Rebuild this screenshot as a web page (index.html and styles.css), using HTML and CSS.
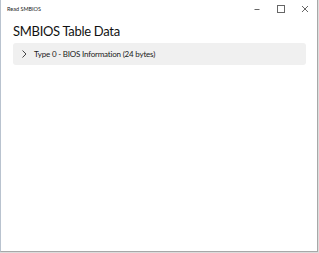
FILE: index.html
```html
<!DOCTYPE html>
<html lang="en">
<head>
  <meta charset="UTF-8" />
  <title>Read SMBIOS</title>
  <link rel="stylesheet" href="styles.css">
</head>
<body>
  <div class="window">
    <div class="titlebar">
      <span class="title">Read SMBIOS</span>
      <div class="controls">
        <span class="ctl">
          <svg width="10" height="10" viewBox="0 0 10 10"><path d="M2.5 5.5h5" stroke="#666" stroke-width="1"/></svg>
        </span>
        <span class="ctl">
          <svg width="10" height="10" viewBox="0 0 10 10"><rect x="1.5" y="1.5" width="7" height="7" fill="none" stroke="#666" stroke-width="1"/></svg>
        </span>
        <span class="ctl">
          <svg width="10" height="10" viewBox="0 0 10 10"><path d="M2 2l6 6M8 2l-6 6" stroke="#666" stroke-width="1"/></svg>
        </span>
      </div>
    </div>

    <div class="content">
      <h1>SMBIOS Table Data</h1>
      <div class="expander">
        <svg class="chevron" width="6" height="8" viewBox="0 0 6 8"><path d="M1.5 0.5l3.5 3.5-3.5 3.5" fill="none" stroke="#444" stroke-width="1"/></svg>
        <span>Type 0 - BIOS Information (24 bytes)</span>
      </div>
    </div>
  </div>
</body>
</html>
```

FILE: styles.css
```css
body {
  margin: 0;
  background: #dcdcdc;
  font-family: 'Lato', 'Noto Sans', sans-serif;
  color: #1a1a1a;
}

.window {
  width: 316px;
  height: 251px;
  background: #fff;
  border-left: 1px solid #b9c3cf;
  border-right: 1px solid #a8a8a8;
  border-bottom: 1px solid #a8a8a8;
}

.titlebar {
  height: 18px;
  display: flex;
  align-items: center;
  justify-content: space-between;
  padding-left: 6px;
}

.title {
  font-size: 5.5px;
  color: #222;
}

.controls {
  display: flex;
  align-items: center;
}

.ctl {
  width: 24px;
  display: flex;
  justify-content: center;
}

.content {
  padding: 0 11px 0 12px;
}

h1 {
  font-size: 13px;
  font-weight: 400;
  letter-spacing: -0.3px;
  line-height: 18px;
  margin: 4px 0 3px;
  color: #111;
}

.expander {
  height: 22px;
  background: #f0f0f0;
  border-radius: 3px;
  display: flex;
  align-items: center;
  gap: 7px;
  padding-left: 8px;
  font-size: 8px;
  letter-spacing: -0.2px;
  color: #1a1a1a;
}

.chevron {
  flex: none;
}
```
